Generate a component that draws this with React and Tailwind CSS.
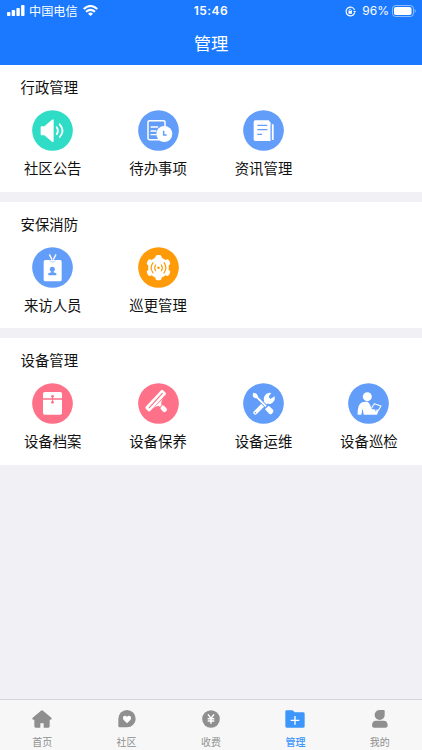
import React from 'react';

const BLUE = '#629dfa';

function Disc({ color, children }) {
  return (
    <svg className="block h-[41px] w-[41px]" viewBox="0 0 123 123" fill="none">
      <circle cx="61.5" cy="61.5" r="61" fill={color} />
      {children}
    </svg>
  );
}

const Speaker = () => (
  <Disc color="#2fdcc6">
    <path d="M28 49H37L60 29Q65 26 65 31V93Q65 98 60 95L37 76H28Q26 76 26 73V52Q26 49 28 49Z" fill="#fff" />
    <path d="M74 52Q81 62 74 73M83 43Q100 62 83 81" stroke="#fff" strokeWidth="5.5" strokeLinecap="round" />
  </Disc>
);

const Todo = () => (
  <Disc color={BLUE}>
    <rect x="30" y="32" width="51" height="57" rx="4" stroke="#fff" strokeWidth="4.5" />
    <path d="M39 51H59M39 63H54M39 74H54" stroke="#fff" strokeWidth="4" strokeLinecap="round" />
    <circle cx="79" cy="72" r="24" fill="#fff" />
    <path d="M77 62V75H86" stroke={BLUE} strokeWidth="4.5" />
  </Disc>
);

const News = () => (
  <Disc color={BLUE}>
    <path d="M37 31H77L83 38V93H37Q32 93 32 88V36Q32 31 37 31Z" fill="#fff" />
    <path d="M86 42H88Q92 42 92 46V90H86Z" fill="#fff" />
    <path d="M84.5 43V91" stroke={BLUE} strokeWidth="2.5" />
    <path d="M43 46H73M43 59H73M43 73H57" stroke={BLUE} strokeWidth="3.5" />
  </Disc>
);

const Badge = () => (
  <Disc color={BLUE}>
    <path d="M52 22L60 38M72 22L64 38" stroke="#fff" strokeWidth="4" />
    <path d="M40 39H84Q89 39 89 44V98Q89 103 84 103H40Q35 103 35 98V44Q35 39 40 39Z" fill="#fff" />
    <path d="M53 40Q55 45 61.5 45T70 40" stroke={BLUE} strokeWidth="1.5" />
    <circle cx="61" cy="67" r="7.5" fill={BLUE} />
    <path d="M58 70H64V76L73 79V85H49V79L58 76Z" fill={BLUE} />
  </Disc>
);

const Patrol = () => (
  <Disc color="#ff9b08">
    <g fill="#fff">
      <circle cx="61.5" cy="62" r="31" />
      <rect x="52" y="24" width="19" height="76" rx="7" />
      <rect x="52" y="24" width="19" height="76" rx="7" transform="rotate(60 61.5 62)" />
      <rect x="52" y="24" width="19" height="76" rx="7" transform="rotate(120 61.5 62)" />
    </g>
    <circle cx="61.5" cy="62.5" r="3.8" fill="#ff9b08" />
    <path d="M53 54Q47 62 53 71M70 54Q76 62 70 71M45 47Q34 62 45 78M78 47Q89 62 78 78" stroke="#ff9b08" strokeWidth="3.6" strokeLinecap="round" />
  </Disc>
);

const Cabinet = () => (
  <Disc color="#ff7188">
    <path d="M38 27H85Q90 27 90 32V46H33V32Q33 27 38 27ZM33 50H90V90Q90 95 85 95H38Q33 95 33 90Z" fill="#fff" />
    <path d="M61.5 40V57" stroke="#ff7188" strokeWidth="3" />
    <circle cx="61.5" cy="40" r="4.2" fill="#ff7188" />
    <circle cx="61.5" cy="58" r="4.2" fill="#ff7188" />
  </Disc>
);

const Scraper = () => (
  <Disc color="#ff7188">
    <rect x="15" y="43.5" width="76" height="19" rx="5" transform="rotate(-47 53 53)" fill="#fff" />
    <path d="M75 47Q67 58 71 66L66 71Q59 66 46 75Z" fill="#fff" />
    <path d="M34 74L73 31" stroke="#ff7188" strokeWidth="3.5" strokeLinecap="round" />
    <path d="M67 75L74 66Q79 69 84 74Q88 78 87 82L81 88Q77 88 73 84Q69 80 67 75Z" fill="#fff" />
  </Disc>
);

const Tools = () => (
  <Disc color={BLUE}>
    <path d="M37 89L69 57" stroke="#fff" strokeWidth="12" strokeLinecap="round" />
    <path d="M85 30L77 41L82 48L95 40Q98 55 84 62Q75 65 66 58Q59 49 65 38Q72 27 85 30Z" fill="#fff" />
    <path d="M38 39L68 69" stroke={BLUE} strokeWidth="10" />
    <path d="M31 31L40 33L44 41L39 45L31 41Z" fill="#fff" stroke="#fff" strokeWidth="3" strokeLinejoin="round" />
    <path d="M38 39L69 70" stroke="#fff" strokeWidth="5.5" />
    <path d="M66 79L77 68L91 81Q93 88 86 93Q80 95 77 91Z" fill="#fff" />
    <circle cx="37" cy="89" r="2.2" fill={BLUE} />
  </Disc>
);

const Inspector = () => (
  <Disc color={BLUE}>
    <circle cx="58" cy="41" r="13.5" fill="#fff" />
    <path d="M29 95Q28 72 36 62Q41 56 51 56H58Q63 57 66 65L72 79H87Q91 81 90 88L87 95H47L43 82L40 95Z" fill="#fff" />
    <path d="M43 80L45 94" stroke={BLUE} strokeWidth="3" />
    <path d="M71 75L79 62L99 69L90 84L86 83" stroke="#fff" strokeWidth="3.2" strokeLinejoin="round" />
    <path d="M77 77L86 81L81 85" stroke={BLUE} strokeWidth="2.5" />
  </Disc>
);

const sections = [
  { title: '行政管理', items: [['社区公告', Speaker], ['待办事项', Todo], ['资讯管理', News]] },
  { title: '安保消防', items: [['来访人员', Badge], ['巡更管理', Patrol]] },
  { title: '设备管理', items: [['设备档案', Cabinet], ['设备保养', Scraper], ['设备运维', Tools], ['设备巡检', Inspector]] },
];

const tabs = [
  {
    label: '首页',
    icon: <path d="M27 2Q30 -1 33 2L58 23Q61 28 56 29H53V49Q53 53 49 53H35V40H25V53H11Q7 53 7 49V29H4Q-1 28 2 23Z" fill="#8f8f8f" />,
  },
  {
    label: '社区',
    icon: (
      <>
        <path d="M30 0A26 26 0 1 1 30 52H8Q4 52 4 48V26A26 26 0 0 1 30 0Z" fill="#8f8f8f" />
        <path d="M30 40L20 30Q15 22 21 18Q27 15 30 21Q33 15 39 18Q45 22 40 30Z" fill="#fff" />
      </>
    ),
  },
  {
    label: '收费',
    icon: (
      <>
        <circle cx="30" cy="27" r="26.5" fill="#8f8f8f" />
        <path d="M21 13L30 25L39 13M30 25V41M20 26H40M20 33H40" stroke="#fff" strokeWidth="4.5" fill="none" />
      </>
    ),
  },
  {
    label: '管理',
    active: true,
    icon: (
      <>
        <path d="M5 1H21Q24 1 26 4L29 7H55Q59 7 59 11V49Q59 53 55 53H5Q1 53 1 49V5Q1 1 5 1Z" fill="#3d96fb" />
        <path d="M30 18V44M17 31H43" stroke="#fff" strokeWidth="4" />
      </>
    ),
  },
  {
    label: '我的',
    icon: (
      <>
        <path d="M29 0H41Q44 0 44 3V15A15 15 0 1 1 29 0Z" fill="#8f8f8f" />
        <path d="M18 32H41Q52 32 53 45Q53 53 46 53H13Q6 53 6 45Q7 32 18 32Z" fill="#8f8f8f" />
      </>
    ),
  },
];

function StatusBar() {
  return (
    <div className="grid h-[22px] grid-cols-3 items-center text-[12.2px] leading-none">
      <div className="flex items-center pl-[7px]">
        <svg className="h-[11px] w-[18px]" viewBox="0 0 18 11" fill="#fff">
          <rect x="0" y="7" width="3.4" height="4" rx="0.8" />
          <rect x="4.7" y="5" width="3.4" height="6" rx="0.8" />
          <rect x="9.4" y="3" width="3.4" height="8" rx="0.8" />
          <rect x="14.1" y="0" width="3.4" height="11" rx="0.8" />
        </svg>
        <span className="ml-[4px] whitespace-nowrap">中国电信</span>
        <svg className="ml-[5px] h-[11px] w-[15px]" viewBox="0 0 15 11" fill="none" stroke="#fff" strokeWidth="2.1">
          <path d="M0.7 4Q7.5 -2 14.3 4" />
          <path d="M3 6.8Q7.5 2.8 12 6.8" />
          <path d="M5 8.7Q7.5 6.5 10 8.7L7.5 11Z" fill="#fff" stroke="none" />
        </svg>
      </div>
      <div className="text-center font-['Inter'] text-[12px] font-semibold tracking-[0.45px]">15:46</div>
      <div className="flex items-center justify-end pr-[6px]">
        <svg className="h-[11px] w-[11px]" viewBox="0 0 11 11" fill="none" stroke="#fff" strokeWidth="1.2">
          <path d="M9.6 7A4.4 4.4 0 1 1 9.6 4" />
          <path d="M8.2 5H11L9.6 7Z" fill="#fff" stroke="none" />
          <rect x="3.5" y="5" width="3.4" height="2.8" fill="#fff" stroke="none" />
          <path d="M4.1 5V4Q5.2 2.3 6.3 4V5" strokeWidth="0.8" />
        </svg>
        <span className="ml-[6px] font-['Inter'] text-[12px]">96%</span>
        <svg className="ml-[3px] h-[12px] w-[24px]" viewBox="0 0 24 12" fill="none">
          <rect x="0.5" y="0.5" width="21" height="11" rx="3.2" stroke="#fff" strokeOpacity="0.5" />
          <rect x="2" y="2" width="17.5" height="8" rx="1.8" fill="#fff" />
          <path d="M22.7 4Q25 6 22.7 8Z" fill="#fff" fillOpacity="0.5" />
        </svg>
      </div>
    </div>
  );
}

export default function App() {
  return (
    <div className="flex h-[750px] w-[422px] flex-col overflow-hidden bg-[#f0f0f5] font-['Noto_Sans_CJK_SC',sans-serif] text-[#111]">
      <header className="h-[65px] shrink-0 bg-[#1a79ff] text-white">
        <StatusBar />
        <h1 className="text-center text-[17.3px] leading-[41px]">管理</h1>
      </header>
      <main className="flex grow flex-col gap-[10px]">
        {sections.map((section) => (
          <section key={section.title} className="h-[126.5px] bg-white pt-[11px]">
            <h2 className="pl-[20.5px] text-[14.4px] leading-[22px]">{section.title}</h2>
            <div className="mt-[12px] grid w-[421.6px] grid-cols-4">
              {section.items.map(([label, Icon]) => (
                <div key={label} className="flex flex-col items-center">
                  <Icon />
                  <span className="mt-[6px] text-[14.4px] leading-[22px]">{label}</span>
                </div>
              ))}
            </div>
          </section>
        ))}
      </main>
      <nav className="grid h-[51px] shrink-0 grid-cols-5 border-t border-[#d5d5dc] bg-[#f7f7f7]">
        {tabs.map((tab) => (
          <div key={tab.label} className="flex flex-col items-center pt-[10px]">
            <svg className="h-[18px] w-[20px]" viewBox="0 0 60 54">{tab.icon}</svg>
            <span className={tab.active ? 'mt-[6px] text-[10px] font-medium leading-[16px] text-[#3d96fb]' : 'mt-[6px] text-[10px] leading-[16px] text-[#8f8f8f]'}>
              {tab.label}
            </span>
          </div>
        ))}
      </nav>
    </div>
  );
}
